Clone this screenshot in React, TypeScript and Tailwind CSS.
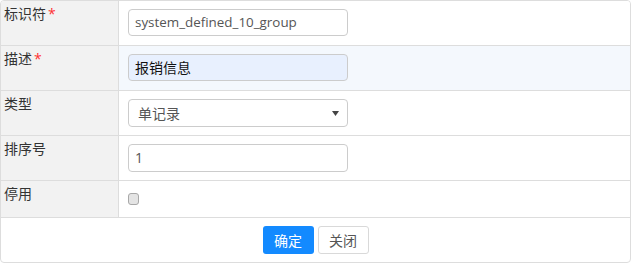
import React from 'react';

const cjk = { fontFamily: '"Open Sans", "Noto Sans CJK SC", sans-serif' };

// one form line: grey label cell on the left, field on the right
function Row({ label, required, children, tall = true, tint = false }: {
  label: string;
  required?: boolean;
  children: React.ReactNode;
  tall?: boolean;
  tint?: boolean;
}) {
  return (
    <div className={`flex border-b border-[#dddddd] ${tall ? 'h-[45px]' : 'h-[37px]'}`}>
      <div className="w-[118px] shrink-0 bg-[#f2f2f2] border-r border-[#dddddd] pl-[3px] pt-[3px] text-[14px] leading-[20px] text-[#333]">
        {label}
        {required && <span className="text-[#ff3333] ml-[2px]">*</span>}
      </div>
      <div className={`flex-1 pl-[9px] ${tall ? 'pt-[8px]' : 'pt-[12px]'} ${tint ? 'bg-[#f4f8fd]' : 'bg-white'}`}>
        {children}
      </div>
    </div>
  );
}

export default function App() {
  return (
    <div className="p-0 bg-white" style={cjk}>
      <div className="w-[631px] h-[263px] border border-[#dddddd] rounded-[4px] overflow-hidden">
        <Row label="标识符" required>
          <div className="w-[220px] h-[27px] border border-[#cccccc] rounded-[4px] bg-white px-[6px] text-[13.4px] leading-[25px] text-[#555]">
            system_defined_10_group
          </div>
        </Row>
        <Row label="描述" required tint>
          <div className="w-[220px] h-[27px] border border-[#cccccc] rounded-[4px] bg-[#e8f0fe] px-[6px] text-[14px] leading-[25px] text-[#111]">
            报销信息
          </div>
        </Row>
        <Row label="类型">
          <div className="w-[220px] h-[28px] border border-[#cccccc] rounded-[4px] bg-white pl-[9px] pr-[8px] flex items-center justify-between text-[14px] text-[#555]">
            <span>单记录</span>
            <svg width="7" height="5" viewBox="0 0 7 5">
              <path d="M0 0 L7 0 L3.5 5 Z" fill="#444" />
            </svg>
          </div>
        </Row>
        <Row label="排序号">
          <div className="w-[220px] h-[28px] border border-[#cccccc] rounded-[4px] bg-white px-[6px] text-[14px] leading-[26px] text-[#555]">
            1
          </div>
        </Row>
        <Row label="停用" tall={false}>
          <div className="w-[11px] h-[12px] rounded-[3px] border border-[#a8a8a8] bg-[#e4e4e4]" />
        </Row>
        <div className="flex justify-center gap-[4px] pt-[8px]">
          <button className="w-[51px] h-[28px] rounded-[3px] bg-[#138aff] text-white text-[14px]">确定</button>
          <button className="w-[51px] h-[28px] rounded-[3px] border border-[#d9d9d9] bg-white text-[#555] text-[14px]">关闭</button>
        </div>
      </div>
    </div>
  );
}
